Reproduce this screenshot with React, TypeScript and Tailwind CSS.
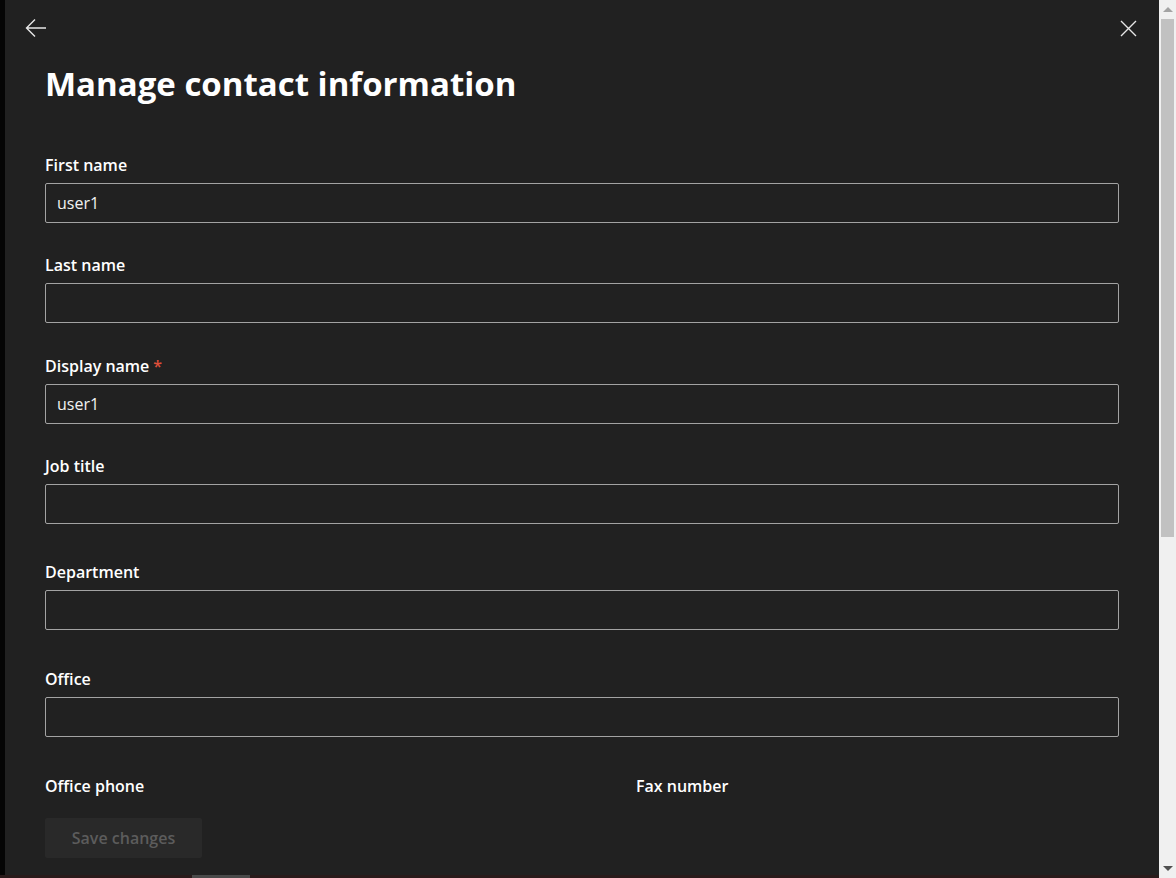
import React from "react";

const font = { fontFamily: '"Open Sans", "Noto Sans", sans-serif' };

function Field({
  label,
  value,
  required,
  className,
}: {
  label: string;
  value?: string;
  required?: boolean;
  className?: string;
}) {
  return (
    <div className={className}>
      <label className="block text-[16px] font-semibold leading-[22px] text-white">
        {label}
        {required && <span className="ml-1 text-[#e04f3a]">*</span>}
      </label>
      <div className="mt-[7px] flex h-10 items-center rounded-[2px] border border-[#a3a3a3] px-[11px] text-[16px] text-[#f2f2f2]">
        {value}
      </div>
    </div>
  );
}

function Scrollbar() {
  return (
    <div className="flex h-full w-[17px] shrink-0 flex-col bg-[#f0f0f0]">
      <div className="flex h-[19px] items-center justify-center">
        <div className="h-0 w-0 border-x-[5px] border-b-[5px] border-x-transparent border-b-[#a3a3a3]" />
      </div>
      <div className="ml-[2px] mr-[2px] h-[518px] bg-[#c1c1c1]" />
      <div className="flex-1" />
      <div className="flex h-[19px] items-center justify-center">
        <div className="h-0 w-0 border-x-[5px] border-t-[5px] border-x-transparent border-t-[#505050]" />
      </div>
    </div>
  );
}

export default function App() {
  return (
    <div className="flex h-[878px] w-[1176px] overflow-hidden bg-[#212121]" style={font}>
      <div className="flex min-w-0 flex-1 flex-col">
        <div className="flex min-h-0 flex-1">
          <div className="w-[5px] shrink-0 bg-[#050505]" />
          <div className="relative flex-1 overflow-hidden bg-[#212121] px-10">
            <div className="flex h-[56px] items-center justify-between">
              <button className="-ml-5 text-[#e6e6e6]" aria-label="Back">
                <svg width="22" height="20" viewBox="0 0 22 20" fill="none" stroke="currentColor" strokeWidth="1.4">
                  <path d="M21 10H2M10 1.5L1.5 10 10 18.5" />
                </svg>
              </button>
              <button className="-mr-[18px] text-[#e6e6e6]" aria-label="Close">
                <svg width="17" height="17" viewBox="0 0 17 17" fill="none" stroke="currentColor" strokeWidth="1.4">
                  <path d="M1 1l15 15M16 1L1 16" />
                </svg>
              </button>
            </div>
            <h1 className="mt-[6px] text-[33px] font-bold leading-[44px] text-white">
              Manage contact information
            </h1>
            <Field className="mt-[48px]" label="First name" value="user1" />
            <Field className="mt-[31px]" label="Last name" />
            <Field className="mt-[32px]" label="Display name" value="user1" required />
            <Field className="mt-[31px]" label="Job title" />
            <Field className="mt-[37px]" label="Department" />
            <Field className="mt-[38px]" label="Office" />
            <div className="mt-[38px] grid grid-cols-[591px_1fr]">
              <div className="text-[16px] font-semibold leading-[22px] text-white">Office phone</div>
              <div className="text-[16px] font-semibold leading-[22px] text-white">Fax number</div>
            </div>
            <button className="mt-[21px] h-10 w-[157px] rounded-[2px] bg-[#292929] text-[16px] font-semibold text-[#5c5c5c]">
              Save changes
            </button>
          </div>
        </div>
        <div className="flex h-[3px] shrink-0 bg-[#2a1b1b]">
          <div className="ml-[192px] w-[58px] bg-[#4a4a4a]" />
        </div>
      </div>
      <Scrollbar />
    </div>
  );
}
